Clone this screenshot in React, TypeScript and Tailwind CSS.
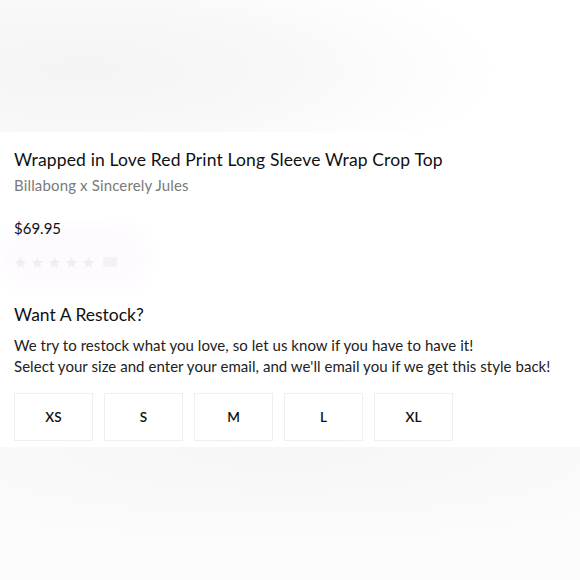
import React from 'react';

const sizes = ['XS', 'S', 'M', 'L', 'XL'];

const Star: React.FC = () => (
  <svg className="w-[13px] h-[13px]" viewBox="0 0 24 24" fill="#f1edf1">
    <path d="M12 2l3 6.9 7.5.7-5.7 5 1.7 7.4L12 18.2 5.5 22l1.7-7.4-5.7-5 7.5-.7z" />
  </svg>
);

const App: React.FC = () => {
  return (
    <div className="w-[580px] h-[580px] bg-white overflow-hidden flex flex-col font-['Lato',sans-serif] text-[#111]">
      {/* image area, still loading */}
      <div className="h-[132px] shrink-0 bg-[radial-gradient(ellipse_420px_120px_at_80px_70px,#f4f4f4_0%,#f8f8f8_50%,#fdfdfd_85%,#ffffff_100%)]" />

      <div className="px-[14px] pt-[17px] flex flex-col">
        <h1 className="text-[17.5px] leading-[22px] font-normal tracking-[0.15px]">
          Wrapped in Love Red Print Long Sleeve Wrap Crop Top
        </h1>
        <p className="mt-[4px] text-[15px] leading-[20px] text-[#7a7a7a] tracking-[0.15px]">Billabong x Sincerely Jules</p>

        <div className="relative mt-[23px]">
          <div className="absolute left-[-14px] top-[6px] w-[150px] h-[66px] rounded-[40px] bg-[#fefbfe] blur-[6px]" />
          <p className="relative text-[15px] leading-[20px]">$69.95</p>
          <div className="relative mt-[16px] flex gap-[4px] h-[16px] items-center">
            <Star />
            <Star />
            <Star />
            <Star />
            <Star />
            <span className="ml-[4px] w-[14px] h-[10px] bg-[#f5f1f5] rounded-[2px]" />
          </div>
        </div>

        <h2 className="mt-[34px] text-[17.5px] leading-[22px]">Want A Restock?</h2>
        <p className="mt-[9px] text-[15px] leading-[21px] text-[#222] tracking-[0.05px]">
          We try to restock what you love, so let us know if you have to have it!
          <br />
          Select your size and enter your email, and we'll email you if we get this style back!
        </p>

        <div className="mt-[16px] flex gap-[11px]">
          {sizes.map(s => (
            <button
              key={s}
              className="w-[79px] h-[48px] border border-[#efefef] bg-white text-[13.5px] font-semibold text-[#111] flex items-center justify-center"
            >
              {s}
            </button>
          ))}
        </div>
      </div>

      {/* below the fold, loading */}
      <div className="mt-[6px] flex-1 bg-[radial-gradient(ellipse_520px_110px_at_280px_0px,#f6f6f6_0%,#f9f9f9_50%,#fcfcfc_100%)]" />
    </div>
  );
};

export default App;
